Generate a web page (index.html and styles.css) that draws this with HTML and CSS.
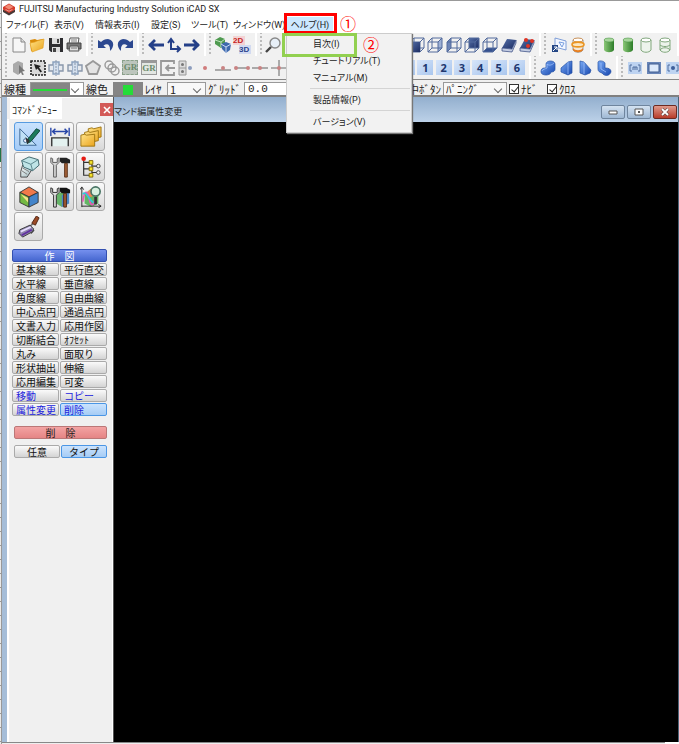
FILE: index.html
```html
<!DOCTYPE html>
<html lang="ja">
<head>
<meta charset="utf-8">
<title>FUJITSU Manufacturing Industry Solution iCAD SX</title>
<link rel="stylesheet" href="styles.css">
</head>
<body>
<svg class="sprite" aria-hidden="true">
  <defs>
    <linearGradient id="navy" x1="0" y1="0" x2="1" y2="1"><stop offset="0" stop-color="#5570a8"/><stop offset="1" stop-color="#1c2c62"/></linearGradient>
    <linearGradient id="blue" x1="0" y1="0" x2="1" y2="1"><stop offset="0" stop-color="#79aaf5"/><stop offset="1" stop-color="#1747ae"/></linearGradient>
    <linearGradient id="green" x1="0" x2="1"><stop offset="0" stop-color="#8cc878"/><stop offset="1" stop-color="#2c7c28"/></linearGradient>
    <linearGradient id="gold" x1="0" y1="0" x2="1" y2="1"><stop offset="0" stop-color="#ffe38a"/><stop offset="1" stop-color="#eaa41c"/></linearGradient>
    <linearGradient id="steel" x1="0" y1="0" x2="1" y2="1"><stop offset="0" stop-color="#ffffff"/><stop offset="1" stop-color="#9cb8bb"/></linearGradient>
  </defs>
  <symbol id="new" viewBox="0 0 16 16"><path d="M2 1h8l4 4v10H2z" fill="#f6f6f6" stroke="#888"/><path d="M10 1v4h4" fill="#ddd" stroke="#888"/></symbol>
  <symbol id="open" viewBox="0 0 16 16"><path d="M1 3l5-1 2 1 6-1v8L2 14z" fill="#d98b0a"/><path d="M1 6l5-1 2-1 7-2-1 9-11 4z" fill="url(#gold)" stroke="#e39a18" stroke-width=".6"/></symbol>
  <symbol id="save" viewBox="0 0 16 16"><path d="M1 1h14v14H3l-2-2z" fill="#2d2d30"/><path d="M4 1h8v6H4zM4 10h8v5H4z" fill="#ddd"/><path d="M9 2h2v4H9zM5 11h3v4H5z" fill="#444"/></symbol>
  <symbol id="print" viewBox="0 0 16 16"><path d="M4 1h9l-1 6H3z" fill="#fff" stroke="#555"/><path d="M1 6h14v6H1z" fill="#777" stroke="#444"/><path d="M4 9h8l1 5H3z" fill="#ddd" stroke="#555"/><path d="M5 3h6M5 5h6M5 11h6" stroke="#777"/></symbol>
  <symbol id="undo" viewBox="0 0 16 16"><path d="M0 3v8h8L5.500 8.500c4-3 7-1 6.500 5.500 5-5 4-11-2-12-3 0-5 1-7 3z" fill="#2c4890"/></symbol>
  <symbol id="redo" viewBox="0 0 16 16"><path d="M16 3v8H8l2.500-2.500c-4-3-7-1-6.500 5.500-5-5-4-11 2-12 3 0 5 1 7 3z" fill="#2c4890"/></symbol>
  <symbol id="left" viewBox="0 0 16 16"><path d="M1 8h15M7 3L2 8l5 5" fill="none" stroke="#243f88" stroke-width="2.8"/></symbol>
  <symbol id="right" viewBox="0 0 16 16"><path d="M0 8h15M9 3l5 5-5 5" fill="none" stroke="#243f88" stroke-width="2.8"/></symbol>
  <symbol id="upright" viewBox="0 0 16 16"><path d="M5 3v9h9M2 6l3-4 3 4M11 9l3 3-3 3" fill="none" stroke="#243f88" stroke-width="2"/></symbol>
  <symbol id="cubes" viewBox="0 0 16 16"><path d="M0 3l5-3 5 2v6l-4 3-6-4z" fill="#4f9a50"/><path d="M0 3l6 2 4-3M6 5v5" stroke="#bfe3bd" fill="none"/><path d="M6 7l5-2 5 2-1 6-4 3-4-4z" fill="#3d69ad"/><path d="M6 7l5 3 5-3M11 10v6" stroke="#c9d8f4" fill="none"/></symbol>
  <symbol id="lens" viewBox="0 0 16 16"><circle cx="10" cy="6" r="5" fill="#e8f0f8" stroke="#888" stroke-width="1.4"/><path d="M6 10l-5 5" stroke="#444" stroke-width="2.4"/></symbol>
  <symbol id="frame" viewBox="0 0 16 16"><path d="M1 5h10v10H1zM5 1h10v10H5zM1 5l4-4M11 5l4-4M11 15l4-4M1 15l4-4" fill="none" stroke="#526a9c"/></symbol>
  <symbol id="c1" viewBox="0 0 16 16"><use href="#frame"/><path d="M1 5h10v10H1z" fill="url(#navy)"/></symbol>
  <symbol id="c2" viewBox="0 0 16 16"><path d="M11 5l4-4v10l-4 4z" fill="#9db0d5"/><use href="#frame"/></symbol>
  <symbol id="c3" viewBox="0 0 16 16"><path d="M1 5l4-4v10l-4 4z" fill="#6e86b8"/><use href="#frame"/></symbol>
  <symbol id="c4" viewBox="0 0 16 16"><path d="M5 1h10v10H5z" fill="url(#navy)"/><use href="#frame"/></symbol>
  <symbol id="c5" viewBox="0 0 16 16"><path d="M1 15l4-4h10l-4 4z" fill="#35518f"/><use href="#frame"/></symbol>
  <symbol id="c6" viewBox="0 0 16 16"><path d="M1 11L6 2l9 1-4 9z" fill="url(#navy)"/><path d="M1 11l10 1 4-9v3l-4 9-10-1z" fill="#c4cde2" stroke="#2f447d" stroke-width=".7"/></symbol>
  <symbol id="c7" viewBox="0 0 16 16"><use href="#c6"/><circle cx="7" cy="3" r="2" fill="#e03424"/><circle cx="13" cy="4" r="2" fill="#e03424"/><circle cx="9" cy="9" r="2" fill="#e03424"/></symbol>
  <symbol id="plane" viewBox="0 0 16 16"><path d="M4 1l11 3v9L4 10z" fill="#f4f7ff" stroke="#7e9ed8"/><path d="M8 5l5 1-2 4z" fill="none" stroke="#79a0e0"/><path d="M1 8h6v7H1z" fill="#244685"/><path d="M2 14l4-4M3 10h3v3" stroke="#fff" fill="none"/></symbol>
  <symbol id="ring" viewBox="0 0 16 16"><path d="M3 3v10c2 3 8 3 10 0V3" fill="#f4ead8" stroke="#999"/><ellipse cx="8" cy="3" rx="5" ry="2" fill="#fff" stroke="#c89058"/><ellipse cx="8" cy="7.500" rx="6" ry="2.400" fill="#fbe6c0" stroke="#eb9522" stroke-width="1.600"/><path d="M3 11c2 3 8 3 10 0v2c-2 3-8 3-10 0z" fill="#e87f20"/></symbol>
  <symbol id="cyl" viewBox="0 0 16 16"><path d="M3 3v10c2 3 8 3 10 0V3z" fill="url(#green)"/><ellipse cx="8" cy="3" rx="5" ry="2" fill="#a7d69b" stroke="#4e9648" stroke-width=".6"/></symbol>
  <symbol id="cylw" viewBox="0 0 16 16"><path d="M3 3v10c2 3 8 3 10 0V3" fill="#edf4ec" stroke="#81a77d"/><ellipse cx="8" cy="3" rx="5" ry="2" fill="#fff" stroke="#81a77d"/></symbol>
  <symbol id="cylx" viewBox="0 0 16 16"><use href="#cylw"/><path d="M3 8c2 2 8 2 10 0M3 13c2-3 8-3 10 0" fill="none" stroke="#81a77d"/></symbol>
  <symbol id="solid" viewBox="0 0 16 16"><path d="M2 4l5-3 5 2v8l-5 4-5-3z" fill="#aaa"/><path d="M8 5l6 6-3 .5 2 3-2 .5-1-3-2 2z" fill="#777"/></symbol>
  <symbol id="pick" viewBox="0 0 16 16"><path d="M1 1h14v14H1z" fill="#d9d9d9" stroke="#222" stroke-width="1.600" stroke-dasharray="2 1"/><path d="M4 4l7 2-2 1.500 3 4-1.500 1-3-4L6 10z" fill="#222"/></symbol>
  <symbol id="boxes" viewBox="0 0 16 16"><path d="M5 2h6v12H5z" fill="#d5e0ee" stroke="#8aa0bd" stroke-width="1.400"/><path d="M5 5H1v6h4M11 5h4v6h-4" fill="#e6e9ee" stroke="#8997aa" stroke-width="1.400"/><path d="M8 0v16" stroke="#8997aa" stroke-dasharray="2 1"/></symbol>
  <symbol id="penta" viewBox="0 0 16 16"><path d="M8 1l7 5-3 8H4L1 6z" fill="#e4e4e4" stroke="#999" stroke-width="1.8"/></symbol>
  <symbol id="links" viewBox="0 0 16 16"><g fill="none" stroke="#999" stroke-width="1.4"><circle cx="5" cy="5" r="4"/><circle cx="8" cy="8" r="4"/><circle cx="11" cy="11" r="4"/></g></symbol>
  <symbol id="back" viewBox="0 0 16 16"><path d="M14 4V1H1v14h13v-3M15 8H6M9 5L6 8l3 3" fill="none" stroke="#999" stroke-width="1.800"/></symbol>
  <symbol id="part" viewBox="0 0 16 16"><path d="M1 1h7v14H1zM1 8h7" fill="#ddd" stroke="#999"/><circle cx="4.500" cy="4.500" r="1.500" fill="#777"/><circle cx="4.500" cy="11.500" r="1.500" fill="#777"/><circle cx="12" cy="8" r="2" fill="#8d9dbd"/></symbol>
  <symbol id="dot" viewBox="0 0 16 16"><circle cx="8" cy="8" r="2" fill="#d07c7c"/></symbol>
  <symbol id="mid" viewBox="0 0 16 16"><path d="M0 10h16" stroke="#999" stroke-width="1.600"/><circle cx="8" cy="8" r="2" fill="#c98383"/></symbol>
  <symbol id="ends" viewBox="0 0 16 16"><path d="M1 8h14" stroke="#999" stroke-width="1.600"/><circle cx="2" cy="8" r="2" fill="#c98383"/><circle cx="14" cy="8" r="2" fill="#c98383"/></symbol>
  <symbol id="online" viewBox="0 0 16 16"><path d="M0 8h16" stroke="#999" stroke-width="1.600"/><circle cx="8" cy="8" r="2" fill="#c98383"/></symbol>
  <symbol id="cross" viewBox="0 0 16 16"><path d="M0 8h16M8 0v16" stroke="#999" stroke-width="1.600"/><circle cx="8" cy="8" r="2" fill="#c98383"/></symbol>
  <symbol id="b1" viewBox="0 0 16 16"><path d="M6 4c0-4 9-4 9 0v5c0 3-3 3-4 3 0 4-10 4-10 0 0-4 2-4 5-4z" fill="url(#blue)" stroke="#2450a5" stroke-width=".7"/><path d="M7 4c2 2 5 1 7-1M7 4v4c-2 1-4 1-5 3" fill="none" stroke="#a9c8ff" stroke-width=".7"/></symbol>
  <symbol id="b2" viewBox="0 0 16 16"><path d="M2 8l7-6 4-1v12l-4 2-7-3z" fill="url(#blue)" stroke="#2450a5" stroke-width=".7"/><path d="M9 2v12" stroke="#a9c8ff" stroke-width=".7"/></symbol>
  <symbol id="b3" viewBox="0 0 16 16"><path d="M3 1l4 1 7 8-1 3-5 2-5-2z" fill="url(#blue)" stroke="#2450a5" stroke-width=".7"/><path d="M7 2v12" stroke="#a9c8ff" stroke-width=".7"/></symbol>
  <symbol id="b4" viewBox="0 0 16 16"><path d="M2 2c1-2 6-1 7 1v5c4 0 6 1 6 4-2 5-7 4-9 1-3-1-4-2-4-4z" fill="url(#blue)" stroke="#2450a5" stroke-width=".7"/><path d="M5 3v6l5 3" fill="none" stroke="#a9c8ff" stroke-width=".7"/></symbol>
  <symbol id="v1" viewBox="0 0 16 16"><path d="M0 2h14v12H0z" fill="#bdd3f1"/><path d="M4 5H2v6h2M10 5h2v6h-2M5 10V7h4v3M7 7v3" fill="none" stroke="#506f9f"/></symbol>
  <symbol id="v2" viewBox="0 0 16 16"><path d="M1 2h14v12H1z" fill="#6885b7"/><path d="M3 4h10v8H3z" fill="#dce9fb" stroke="#3f5d91"/></symbol>
  <symbol id="v3" viewBox="0 0 16 16"><path d="M2 2h14v12H2z" fill="#bdd3f1"/><path d="M6 5H4v6h2M12 5h2v6h-2" fill="none" stroke="#506f9f"/><circle cx="9" cy="8" r="2" fill="#3d5f9b"/></symbol>
</svg>

<div class="desktop">
  <div class="sheet-edge"></div>
  <div class="app">
    <header class="titlebar">
      <svg class="logo" viewBox="0 0 14 14"><path d="M0 7l7 3 7-3v3l-7 4-7-4z" fill="#4a3836"/><path d="M0 4l7-4 7 4v3l-7 4-7-4z" fill="#d43a2b"/><path d="M2 4l5-3 5 3-5 3z" fill="#f08a74"/><path d="M3 7l4 2 4-2" fill="none" stroke="#fff" stroke-width=".6"/></svg>
      <span>FUJITSU Manufacturing Industry Solution iCAD SX</span>
    </header>

    <nav class="menubar">
      <button>ファイル(F)</button><button>表示(V)</button><button>情報表示(I)</button><button>設定(S)</button><button>ツール(T)</button><button>ウィンドウ(W)</button>
      <div class="help">
        <button class="help-title">ヘルプ(H)</button>
        <div class="dropdown">
          <button>目次(I)</button><button>チュートリアル(T)</button><button>マニュアル(M)</button>
          <hr><button>製品情報(P)</button>
          <hr><button>バージョン(V)</button>
        </div>
        <div class="mark mark-red"></div>
        <div class="mark mark-green"></div>
        <span class="num num-1">①</span>
        <span class="num num-2">②</span>
      </div>
    </nav>

    <div class="toolbar bar-one">
      <div class="group"><svg><use href="#new"/></svg><svg><use href="#open"/></svg><svg><use href="#save"/></svg><svg><use href="#print"/></svg></div>
      <div class="group"><svg><use href="#undo"/></svg><svg><use href="#redo"/></svg></div>
      <div class="group"><svg><use href="#left"/></svg><svg><use href="#upright"/></svg><svg><use href="#right"/></svg></div>
      <div class="group"><svg><use href="#cubes"/></svg><span class="dims"><b>2D</b><b>3D</b></span></div>
      <div class="group start"><svg><use href="#lens"/></svg></div>
      <div class="group"><svg><use href="#c1"/></svg><svg><use href="#c2"/></svg><svg><use href="#c3"/></svg><svg><use href="#c4"/></svg><svg><use href="#c5"/></svg><svg><use href="#c6"/></svg><svg><use href="#c7"/></svg></div>
      <div class="group"><svg><use href="#plane"/></svg><svg><use href="#ring"/></svg></div>
      <div class="group"><svg><use href="#cyl"/></svg><svg><use href="#cyl"/></svg><svg><use href="#cylw"/></svg><svg><use href="#cylx"/></svg></div>
    </div>

    <div class="toolbar bar-two">
      <div class="group"><svg><use href="#solid"/></svg><svg><use href="#pick"/></svg><svg><use href="#boxes"/></svg><svg><use href="#boxes"/></svg><svg><use href="#penta"/></svg><svg><use href="#links"/></svg><b class="gr">GR</b><b class="gr gr-win">GR</b><svg><use href="#back"/></svg><svg><use href="#part"/></svg><svg><use href="#dot"/></svg><svg><use href="#mid"/></svg><svg><use href="#ends"/></svg><svg><use href="#online"/></svg><svg><use href="#cross"/></svg></div>
      <div class="group"></div>
      <div class="group"><button class="view"></button><button class="view">1</button><button class="view">2</button><button class="view">3</button><button class="view">4</button><button class="view">5</button><button class="view">6</button></div>
      <div class="group"><svg><use href="#b1"/></svg><svg><use href="#b2"/></svg><svg><use href="#b3"/></svg><svg><use href="#b4"/></svg></div>
      <div class="group start last"><svg><use href="#v1"/></svg><svg><use href="#v2"/></svg><svg><use href="#v3"/></svg></div>
    </div>

    <div class="props">
      <label for="ltype">線種</label>
      <div class="pick pick-line"><select id="ltype"><option></option></select><i class="line"></i></div>
      <label for="lcolor">線色</label>
      <div class="pick-color"><select id="lcolor"><option></option></select><i></i></div>
      <label for="layer">ﾚｲﾔ</label>
      <div class="pick"><select id="layer"><option>1</option></select></div>
      <label for="grid">ｸﾞﾘｯﾄﾞ</label>
      <input id="grid" class="field" type="text" value="0.0">
      <label for="mid-btn" class="end">中ﾎﾞﾀﾝ</label>
      <div class="pick"><select id="mid-btn"><option>ﾊﾟﾆﾝｸﾞ</option></select></div>
      <label class="check"><input type="checkbox" checked>ﾅﾋﾞ</label>
      <label class="check"><input type="checkbox" checked>ｸﾛｽ</label>
    </div>

    <main class="workspace">
      <aside class="panel">
        <div class="tabs"><span class="tab">ｺﾏﾝﾄﾞﾒﾆｭｰ</span><button class="close" aria-label="閉じる"><svg viewBox="0 0 8 8"><path d="M1 1l6 6M7 1L1 7" stroke="#fff" stroke-width="1.600"/></svg></button></div>
        <div class="panel-body">
          <div class="tools">
            <button class="on"><svg viewBox="0 0 24 24"><path d="M2 3v18h18z" fill="#bfe0f5" stroke="#38638e"/><circle cx="8" cy="16" r="2" fill="#eef" stroke="#38638e"/><path d="M11 14L20 3l4 2-10 12-4 2z" fill="#197a5c" stroke="#0b3f35"/><path d="M8 12l5 4-3 4z" fill="#333"/></svg></button>
            <button><svg viewBox="0 0 24 24"><path d="M2 2v9M22 2v9" stroke="#2846a8" stroke-width="1.500"/><path d="M3 6h18M7 3L4 6l3 3M17 3l3 3-3 3" fill="none" stroke="#2846a8" stroke-width="1.600"/><path d="M3 22v-9h18v9" fill="#e4f2f0" stroke="#333" stroke-width="1.500"/></svg></button>
            <button><svg viewBox="0 0 24 24"><g fill="url(#gold)" stroke="#9c7310"><path d="M9 3l4-1 2 1 8-2v11l-14 3z"/><path d="M5 7l4-1 2 1 9-2v11L5 19z"/><path d="M1 10l4-1 2 1 9-1v13H1z"/></g></svg></button>
            <button><svg viewBox="0 0 24 24"><path d="M5 10l10 5-5 8H3v-6z" fill="url(#steel)" stroke="#444"/><path d="M4 16l6 4M5 13l7 4" stroke="#777"/><path d="M4 5l8-4 10 3 1 6-7 6-10-4z" fill="#bfe4e6" stroke="#375f66"/><path d="M4 5l10 4 8-5M14 9l2 7" fill="none" stroke="#548087"/></svg></button>
            <button><svg viewBox="0 0 24 24"><path d="M2 2v5l3 3v13h3V10l3-3V2L9 3v4H4V3z" fill="#d4d4d4" stroke="#555"/><path d="M12 2h7l4 2v4h-9l-2-2z" fill="#222"/><path d="M17 8h3v15h-3z" fill="#a36138" stroke="#5c331c"/></svg></button>
            <button><svg viewBox="0 0 24 24"><path d="M4 3v18h7M4 7h7M4 14h7M13 9v2h6M13 15v3h6" fill="none" stroke="#333" stroke-width="1.300"/><circle cx="4" cy="3" r="2.500" fill="#e51b13"/><path d="M10 5h4v4h-4zM10 12h4v4h-4zM10 19h4v4h-4z" fill="#f4e32b" stroke="#806600"/><circle cx="20" cy="11" r="2" fill="#eee" stroke="#444"/><circle cx="20" cy="18" r="2" fill="#eee" stroke="#444"/></svg></button>
            <button><svg viewBox="0 0 24 24"><path d="M2 7l10-6 10 6-10 5z" fill="#f0794a" stroke="#333"/><path d="M2 7v11l10 5V12z" fill="#74b943" stroke="#333"/><path d="M22 7v11l-10 5V12z" fill="#4384ca" stroke="#333"/><path d="M3 9l8 4v5z" fill="#f5e388"/></svg></button>
            <button><svg viewBox="0 0 24 24"><path d="M8 7h12v12l-6 4-6-4z" fill="#64b267"/><path d="M14 10l8-3v12l-8 4z" fill="#4b85c5"/><path d="M2 2v5l3 3v13h3V10l3-3V2L9 3v4H4V3z" fill="#ddd" stroke="#222"/><path d="M12 2h7l4 2v4h-9l-2-2z" fill="#111"/><path d="M16 8h3v15h-3z" fill="#a35a32" stroke="#482417"/></svg></button>
            <button><svg viewBox="0 0 24 24"><path d="M5 9l7-6 8 5v11l-8 4-7-4z" fill="#62b564"/><path d="M5 9l7-6 8 5-8 4z" fill="#ee8652"/><path d="M2 23V2M2 22h21M0 4l2-3 2 3M20 20l3 2-3 2" fill="none" stroke="#222"/><path d="M3 17c2-13 5-13 7-3s5 7 7 0" fill="none" stroke="#e758b9" stroke-width="1.800"/><path d="M3 9c4-5 7 8 12 9" fill="none" stroke="#33cbd9" stroke-width="1.800"/><circle cx="17" cy="6" r="5" fill="#d8f0df" stroke="#4a7565" stroke-width="1.800"/><path d="M17 12v8" stroke="#333" stroke-width="3"/></svg></button>
            <button><svg viewBox="0 0 24 24"><path d="M20 0l3 2-4 8-4-2z" fill="#9b4b27" stroke="#4d2414"/><path d="M16 9l-5 3 6 4-3 3" fill="none" stroke="#555" stroke-width="1.500"/><path d="M2 15l11-5 4 4-1 3-11 6-4-4z" fill="#8f86ad" stroke="#333"/><path d="M3 17l11-5" stroke="#e8dfff" stroke-width="2"/><path d="M4 21l11-6" stroke="#6130a0" stroke-width="2"/></svg></button>
          </div>
          <h2 class="bar draw">作　図</h2>
          <div class="commands">
            <button>基本線</button><button>平行直交</button><button>水平線</button><button>垂直線</button><button>角度線</button><button>自由曲線</button><button>中心点円</button><button>通過点円</button><button>文書入力</button><button>応用作図</button><button>切断結合</button><button>ｵﾌｾｯﾄ</button><button>丸み</button><button>面取り</button><button>形状抽出</button><button>伸縮</button><button>応用編集</button><button>可変</button><button class="link">移動</button><button class="link">コピー</button><button class="link">属性変更</button><button class="link on">削除</button>
          </div>
          <div class="mode">
            <h2 class="bar erase">削　除</h2>
            <div class="commands"><button>任意</button><button class="on">タイプ</button></div>
          </div>
        </div>
      </aside>
      <section class="document">
        <header class="doc-title"><span>マンド編属性変更</span>
          <div class="win-buttons">
            <button aria-label="最小化"><svg viewBox="0 0 12 8"><path d="M2 3h8v3H2z" fill="#fff" stroke="#555"/></svg></button>
            <button aria-label="元に戻す"><svg viewBox="0 0 12 8"><path d="M2 1h8v6H2z" fill="#fff" stroke="#555"/><path d="M5 3h2v2H5z" fill="#555"/></svg></button>
            <button class="quit" aria-label="閉じる"><svg viewBox="0 0 12 8"><path d="M3 1l6 6M9 1L3 7" stroke="#544" stroke-width="3"/><path d="M3 1l6 6M9 1L3 7" stroke="#fff" stroke-width="1.800"/></svg></button>
          </div>
        </header>
        <div class="canvas"></div>
      </section>
    </main>
    <footer class="bottom"></footer>
  </div>
</div>
</body>
</html>
```
FILE: styles.css
```css
* { box-sizing: border-box; }
body {
  margin: 0;
  font: 9px/14px Roboto, "Noto Sans CJK JP", sans-serif;
  color: #222;
  background: #fff;
}
button, input, select { font: inherit; color: inherit; margin: 0; padding: 0; }
button { border: 0; background: none; white-space: nowrap; }
.sprite { position: absolute; width: 0; height: 0; }

.desktop { display: grid; grid-template-columns: 2px minmax(0, 1fr); height: 100vh; }
.sheet-edge {
  border-right: 1px solid #999;
  background:
    linear-gradient(#217346, #217346) 0 148px / 100% 14px no-repeat,
    repeating-linear-gradient(#e9e9e9 0 13px, #999 13px 14px);
}
.app { display: flex; flex-direction: column; min-width: 0; background: #fff; }

.titlebar {
  display: flex; align-items: center; gap: 4px;
  height: 17px; padding-left: 1px;
  border-top: 1px solid #999;
}
.titlebar span { white-space: nowrap; }
.logo { width: 12px; height: 13px; }

.menubar {
  display: grid;
  grid-template-columns: 48px 41px 56px 40px 42px 54px 54px;
  height: 16px; padding-left: 4px;
}
.menubar button { text-align: left; font-feature-settings: "palt"; }
.help { position: relative; }
.menubar .help-title { width: 46px; height: 15px; background: #cce8ff; text-align: center; }
.dropdown {
  position: absolute; z-index: 2; top: 16px; left: -1px; width: 126px;
  display: flex; flex-direction: column;
  padding: 1px 1px 2px;
  background: #f2f2f2; border: 1px solid #ccc;
  box-shadow: 1px 1px 1px #777;
}
.dropdown button { height: 17px; padding-left: 25px; }
.dropdown hr { width: 100px; margin: 2px 0 2px auto; border: 0; border-top: 1px solid #d4d4d4; }
.mark { position: absolute; z-index: 3; }
.mark-red { top: -4px; left: -3px; width: 53px; height: 21px; border: 3px solid #f00; }
.mark-green { top: 16px; left: -5px; width: 75px; height: 24px; border: 3px solid #92d050; }
.num { position: absolute; z-index: 3; font: 16px/18px "Noto Sans CJK JP", sans-serif; color: #f00; }
.num-1 { top: -3px; left: 53px; }
.num-2 { top: 18px; left: 76px; }

.toolbar { display: grid; height: 23px; background: #fff; }
.bar-one { grid-template-columns: 86fr 51fr 67fr 51fr 143fr 141fr 51fr 87fr; }
.bar-two { grid-template-columns: 291fr 97fr 141fr 87fr 61fr; }
.group {
  display: flex; align-items: center; justify-content: space-around;
  min-width: 0; overflow: hidden;
  padding: 0 3px 0 8px;
  border-right: 2px solid #fff;
  background: radial-gradient(circle, #bbb 1px, transparent 1px) 2px 2px / 4px 4px repeat-y, #f1f1f1;
}
.group.start { justify-content: flex-start; }
.group.last { gap: 2px; padding: 0 0 0 10px; border: 0; }
.group svg { flex: none; width: 16px; height: 16px; }
.dims { display: grid; width: 18px; font: 700 8px/9px "Liberation Sans", sans-serif; }
.dims b { width: 12px; color: #c62424; background: #f3d3d3; }
.dims b + b { justify-self: end; color: #2b438d; background: #d2daf0; }
.gr {
  flex: none; width: 16px; height: 15px;
  border: 1px dashed #8aa08a; background: #bcc5bc;
  font: 700 9px/13px "Liberation Serif", serif; color: #6b8b6b; text-align: center;
}
.gr-win { border: 1px solid #999; border-top-width: 3px; background: #e2e6e2; line-height: 11px; }
.view {
  flex: none; width: 16px; height: 15px;
  font: 700 11px/15px "Noto Sans", sans-serif; color: #20376f;
  background: linear-gradient(135deg, #d8e6fa, #a9c6ee);
}

.props {
  display: grid;
  grid-template-columns: 24px 54px 25px 30px 20px 39px 34px 64px 1fr 64px 36px 32px;
  column-gap: 2px;
  align-items: center;
  height: 18px; padding: 1px 100px 0 2px;
  overflow: hidden;
  font: 11px/16px "Noto Sans CJK JP", sans-serif;
  background: #f0f0f0;
  border-top: 1px solid #888; border-bottom: 2px solid #808080;
}
.props label { white-space: nowrap; }
.props .end { text-align: right; }
.pick { position: relative; height: 15px; border: 1px solid #999; background: #f8f8f8; }
.pick::after {
  content: ""; position: absolute; right: 5px; top: 3px; width: 5px; height: 5px;
  border: solid #666; border-width: 0 1px 1px 0; transform: rotate(45deg);
}
.pick select, .pick-color select {
  appearance: none; display: block; width: 100%; height: 100%;
  padding-left: 2px; border: 0; background: none; line-height: 13px;
}
.pick-line { background: linear-gradient(90deg, #858585 0 39px, #fff 39px); }
.line { position: absolute; left: 2px; top: 6px; width: 34px; height: 2px; background: #25dc38; }
.pick-color { position: relative; height: 15px; background: #858585; }
.pick-color i { position: absolute; left: 10px; top: 3px; width: 10px; height: 10px; background: #25dc38; }
.field { width: 100%; height: 15px; padding-left: 3px; border: 1px solid #999; background: #fff; font-family: "Liberation Mono", monospace; }
.check { display: flex; align-items: center; gap: 2px; }
.check input {
  appearance: none; flex: none; width: 10px; height: 10px;
  border: 1px solid #333; background: #fff;
}
.check input::after {
  content: ""; display: block; width: 3px; height: 6px; margin-left: 3px;
  border: solid #222; border-width: 0 1px 1px 0; transform: rotate(40deg);
}

.workspace {
  flex: 1; min-height: 0;
  display: grid; grid-template-columns: 112px minmax(0, 1fr);
}
.panel {
  display: flex; flex-direction: column;
  border-left: 5px solid #a5bdd8; border-right: 1px solid #555;
  background: #f0f0f0;
}
.tabs { display: flex; justify-content: space-between; height: 22px; padding-left: 3px; background: #f0f0f0; border-top: 1px solid #fff; }
.tab { padding: 4px 2px 0; font: 10px/15px "Noto Sans CJK JP", sans-serif; width: 52px; background: #fff; white-space: nowrap; }
.close { display: grid; place-items: center; width: 13px; height: 13px; margin-top: 5px; background: #d35a57; }
.close svg { width: 8px; height: 8px; }
.panel-body { flex: 1; padding: 3px 5px 0 3px; border-left: 2px solid #fff; border-right: 1px solid #fff; }
.tools { display: grid; grid-template-columns: repeat(3, 29px); gap: 1px 2px; margin-left: 2px; }
.tools button {
  display: grid; place-items: center; height: 29px;
  border: 1px solid #aaa; border-radius: 3px;
  background: linear-gradient(#fafafa, #d8d8d8);
}
.tools svg { width: 22px; height: 22px; }
.tools .on { border-color: #579be0; background: linear-gradient(#c9e2fd, #a4cbf6); }
.bar {
  margin: 8px 0 1px; height: 13px;
  border: 1px solid #3350b0; border-radius: 2px;
  font: 10px/11px "Noto Sans CJK JP", sans-serif; text-align: center;
}
.draw { color: #fff; background: linear-gradient(#7590ee, #4566cf); }
.erase { margin: 0 0 6px; border-color: #b77; background: linear-gradient(#f3a3a3, #e58585); }
.commands { display: grid; grid-template-columns: 1fr 1fr; gap: 1px; }
.commands button {
  height: 13px; padding-left: 3px; overflow: hidden;
  border: 1px solid #aaa; border-radius: 2px;
  background: linear-gradient(#fafafa, #d4d4d4);
  font: 10px/11px "Noto Sans CJK JP", sans-serif; color: #111; text-align: left;
}
.commands .link { color: #22d; }
.commands .on { border-color: #4b96e5; background: linear-gradient(#cbe3fd, #a6ccf5); }
.mode { margin: 10px 0 0 2px; }
.mode .commands button { padding: 0; text-align: center; }

.document { display: flex; flex-direction: column; min-width: 0; border-right: 1px solid #4a6478; }
.doc-title {
  display: flex; align-items: center; justify-content: space-between;
  height: 25px; padding-right: 1px;
  background: linear-gradient(#93afce, #bcd1e8);
  font: 9px/16px "Noto Sans CJK JP", sans-serif;
}
.doc-title span { padding-top: 4px; font-feature-settings: "palt"; }
.win-buttons { display: flex; gap: 2px; padding-top: 5px; }
.win-buttons button {
  display: grid; place-items: center; width: 24px; height: 14px;
  border: 1px solid #6f859e; border-radius: 2px;
  background: linear-gradient(#d4e2f1, #9fb8d4);
}
.win-buttons svg { width: 12px; height: 8px; }
.win-buttons .quit { border-color: #6d2a22; background: linear-gradient(#e09a8c, #b83c2a); }
.canvas { flex: 1; background: #000; }
.bottom { height: 2px; margin-right: 14px; border-top: 1px solid #888; background: #eee; }
```
